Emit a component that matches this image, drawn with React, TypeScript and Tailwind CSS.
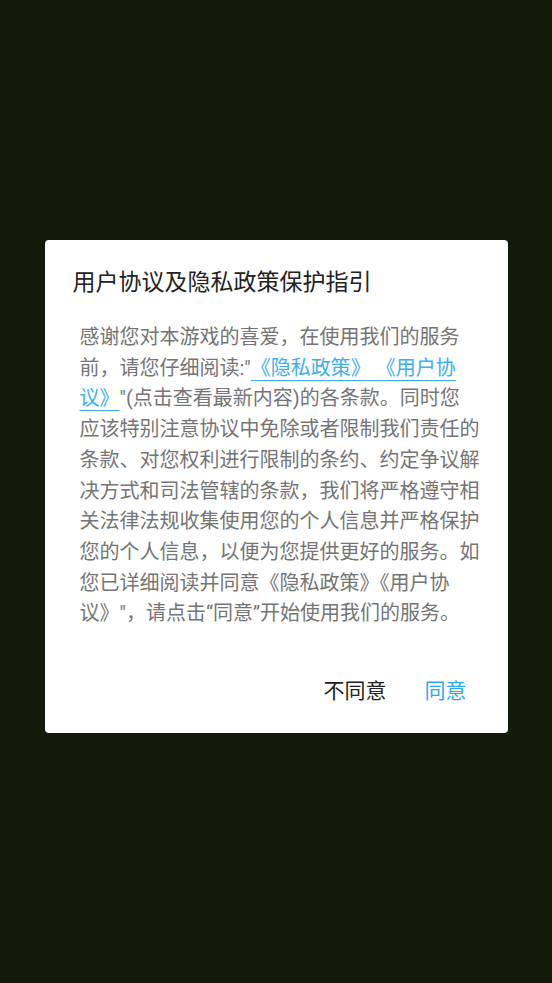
export default function App() {
  return (
    <div
      className="min-h-screen bg-[#121a09] pt-[240px]"
      style={{ fontFamily: 'Roboto, "Noto Sans CJK SC", sans-serif' }}
    >
      <div className="mx-auto w-[463px] rounded-[4px] bg-white pt-[28px] pb-[27px]">
        <h1 className="pl-[28px] text-[23px] leading-[30px] text-[#222222]">用户协议及隐私政策保护指引</h1>

        <p className="mt-[24px] ml-[35px] w-[401px] text-[20px] leading-[30.7px] text-[#757575]">
          感谢您对本游戏的喜爱，在使用我们的服务前，请您仔细阅读:"
          <span className="text-[#3cb0ee] underline decoration-1 underline-offset-[5px]">{'《隐私政策》 《用户协议》'}</span>
          "(点击查看最新内容)的各条款。同时您
          <br />
          应该特别注意协议中免除或者限制我们责任的条款、对您权利进行限制的条约、约定争议解决方式和司法管辖的条款，我们将严格遵守相关法律法规收集使用您的个人信息并严格保护您的个人信息，以便为您提供更好的服务。如您已详细阅读并同意《隐私政策》《用户协议》"，请点击“同意”开始使用我们的服务。
        </p>

        <div className="mt-[47px] flex justify-end gap-[38px] pr-[41px] text-[21px] leading-[30px]">
          <button className="text-[#222222]">不同意</button>
          <button className="text-[#2ea7f0]">同意</button>
        </div>
      </div>
    </div>
  );
}
